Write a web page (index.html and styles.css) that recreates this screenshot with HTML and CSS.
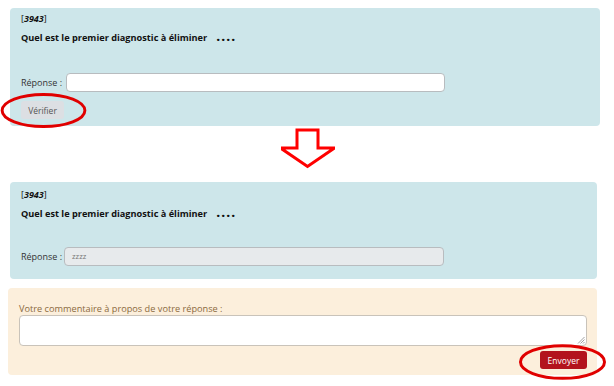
FILE: index.html
```html
<!DOCTYPE html>
<html lang="fr">
<head>
<meta charset="utf-8">
<link rel="stylesheet" href="styles.css">
</head>
<body>
<div class="page">
  <section class="card card-q card-first">
    <div class="qid">[<b><i>3943</i></b>]</div>
    <div class="question">Quel est le premier diagnostic à éliminer <span class="dots">....</span></div>
    <div class="answer-row">
      <label class="lbl">Réponse :</label>
      <div class="input"></div>
    </div>
    <button class="btn-check">Vérifier</button>
    <svg class="ring ring-check" viewBox="0 0 90 38" width="90" height="38"><ellipse cx="45" cy="19" rx="42.5" ry="16.5" fill="none" stroke="#e00000" stroke-width="3"/></svg>
  </section>

  <div class="arrow-wrap">
    <svg width="54" height="42" viewBox="0 0 54 42"><path d="M13.5 2 H34.5 V20 H51 L24 38.5 L-3 20 H13.5 Z" transform="translate(2.5 0)" fill="#fff" stroke="#f00" stroke-width="3" stroke-linejoin="miter"/></svg>
  </div>

  <section class="card card-q card-second">
    <div class="qid">[<b><i>3943</i></b>]</div>
    <div class="question">Quel est le premier diagnostic à éliminer <span class="dots">....</span></div>
    <div class="answer-row answer-row-2">
      <label class="lbl">Réponse :</label>
      <div class="input input-disabled">zzzz</div>
    </div>
  </section>

  <section class="card card-comment">
    <div class="clabel">Votre commentaire à propos de votre réponse :</div>
    <div class="textarea"><svg class="grip" width="8" height="8" viewBox="0 0 8 8"><path d="M7.5 1 L1 7.5 M7.5 3.5 L3.5 7.5 M7.5 6 L6 7.5" stroke="#888" stroke-width="0.8"/></svg></div>
    <div class="send-row"><button class="btn-send">Envoyer</button></div>
    <svg class="ring ring-send" viewBox="0 0 90 38" width="90" height="38"><ellipse cx="45" cy="19" rx="42.5" ry="16.5" fill="none" stroke="#e00000" stroke-width="3"/></svg>
  </section>
</div>
</body>
</html>
```

FILE: styles.css
```css
* { box-sizing: border-box; }
html, body { margin: 0; padding: 0; background: #fff; }
body { font-family: "Open Sans", "DejaVu Sans", sans-serif; color: #222; width: 614px; height: 386px; overflow: hidden; }
.page { position: relative; }

.card { position: relative; border-radius: 4px; }
.card-q { background: #cde6ea; }
.card-first { margin: 8px 14px 0 10px; height: 118px; padding: 4px 11px 0 11px; }
.card-second { margin: 0 17px 0 10px; height: 97px; padding: 6px 11px 0 11px; }

.qid { font-size: 9px; line-height: 14px; color: #111; }
.qid b { font-weight: 700; }
.question { font-size: 9.2px; line-height: 14px; font-weight: 700; color: #111; margin-top: 4px; white-space: nowrap; }
.dots { font-size: 12px; font-weight: 800; letter-spacing: 1.5px; margin-left: 7px; }

.answer-row { display: flex; align-items: center; margin-top: 28px; height: 19px; }
.answer-row-2 { margin-top: 26px; }
.lbl { font-size: 9px; color: #333; margin-right: 3px; white-space: nowrap; }
.input { width: 379px; height: 19px; background: #fff; border: 1px solid #b8bcbf; border-radius: 4px; }
.card-first .input { margin-left: 1px; }
.input-disabled { background: #e7eaec; width: 380px; font-size: 7.5px; color: #777; padding-left: 7px; line-height: 17px; margin-left: -1px; }

.btn-check { display: block; margin-top: 9px; width: 43px; height: 18px; border: none; border-radius: 3px; background: #dcdfe3; color: #555; font-family: inherit; font-size: 8.5px; padding: 0; }

.ring { position: absolute; }
.ring-check { left: -11px; top: 84px; width: 89px; height: 37px; }
.ring-send { left: 510px; top: 55px; width: 89px; height: 38px; }

.arrow-wrap { height: 56px; display: flex; justify-content: center; align-items: flex-start; padding-top: 2px; padding-left: 2px; }

.card-comment { background: #fcefdc; margin: 9px 17px 0 8px; height: 87px; padding: 15px 10px 0 11px; }
.clabel { font-size: 9.2px; line-height: 12px; color: #8b6a3e; }
.textarea { position: relative; height: 31px; background: #fff; border: 1px solid #c9c3ba; border-radius: 4px; margin-top: 0px; }
.grip { position: absolute; right: 1px; bottom: 1px; }
.send-row { display: flex; justify-content: flex-end; margin-top: 5px; }
.btn-send { width: 47px; height: 18px; border: none; border-radius: 3px; background: #b3131d; color: #fff; font-family: inherit; font-size: 8.5px; padding: 0; }
```
